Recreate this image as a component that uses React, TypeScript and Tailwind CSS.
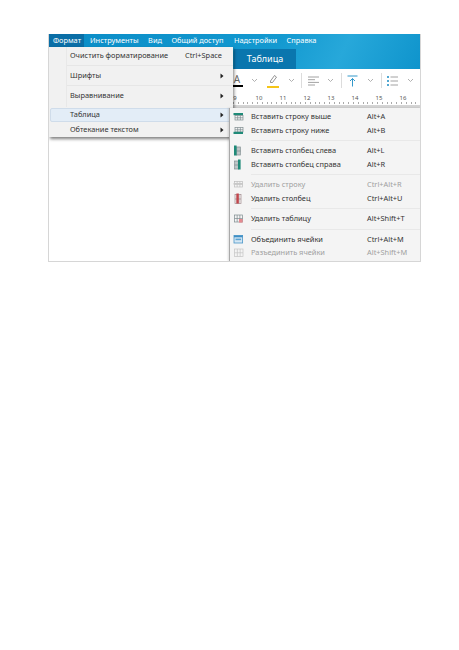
import React from "react";

const font = { fontFamily: '"Noto Sans", "DejaVu Sans", sans-serif' };

function Chevron({ color = "#a8a8a8", ml }: { color?: string; ml: string }) {
  return (
    <svg width="7" height="5" viewBox="0 0 7 5" className={`shrink-0 ${ml}`}>
      <path d="M1 1l2.5 2.5L6 1" fill="none" stroke={color} strokeWidth="0.9" />
    </svg>
  );
}

function Arrow() {
  return (
    <svg width="4" height="6" viewBox="0 0 4 6" className="shrink-0">
      <path d="M0.5 0.5L3.5 3L0.5 5.5Z" fill="#222" />
    </svg>
  );
}

function Grid({ color = "#7d8a8e", x = 0, y = 0, w = 9, h = 7 }: { color?: string; x?: number; y?: number; w?: number; h?: number }) {
  return (
    <g stroke={color} strokeWidth="0.7" fill="none">
      <rect x={x + 0.5} y={y + 0.5} width={w} height={h} />
      <path d={`M${x + 0.5} ${y + h / 2 + 0.5}H${x + w + 0.5}M${x + w / 3 + 0.5} ${y + 0.5}V${y + h + 0.5}M${x + (2 * w) / 3 + 0.5} ${y + 0.5}V${y + h + 0.5}`} />
    </g>
  );
}

type IconKind = "above" | "below" | "left" | "right" | "delrow" | "delcol" | "deltable" | "merge" | "split";

function TableIcon({ kind }: { kind: IconKind }) {
  return (
    <svg width="11" height="11" viewBox="0 0 11 11" className="shrink-0">
      {kind === "above" && (
        <>
          <rect x="0.5" y="2" width="9.5" height="2.2" fill="#1f8a78" />
          <Grid x={1.5} y={4} w={8} h={4.5} />
        </>
      )}
      {kind === "below" && (
        <>
          <Grid x={1.5} y={2} w={8} h={4.5} />
          <rect x="0.5" y="6.8" width="9.5" height="2.2" fill="#1f8a78" />
        </>
      )}
      {kind === "left" && (
        <>
          <Grid x={3} y={1.5} w={4} h={8} />
          <rect x="1" y="0.5" width="2.6" height="10" fill="#1f8a78" />
        </>
      )}
      {kind === "right" && (
        <>
          <Grid x={1} y={1.5} w={4} h={8} />
          <rect x="5" y="0.5" width="2.6" height="10" fill="#1f8a78" />
        </>
      )}
      {kind === "delrow" && (
        <>
          <Grid x={1} y={2} w={8} h={5.5} color="#bcbcbc" />
          <rect x="0.5" y="4" width="9.5" height="1.6" fill="#c8c8c8" />
        </>
      )}
      {kind === "delcol" && (
        <>
          <Grid x={1.5} y={1} w={6} h={9} color="#a08a8e" />
          <rect x="3.4" y="0.5" width="2.4" height="10" fill="#c2454b" />
        </>
      )}
      {kind === "deltable" && (
        <>
          <Grid x={1} y={1.5} w={8} h={7} />
          <rect x="6" y="6" width="3.6" height="3.6" fill="#e58a90" />
        </>
      )}
      {kind === "merge" && (
        <>
          <rect x="1" y="1.5" width="8.6" height="7.5" fill="#d5e7f4" stroke="#4a97c9" strokeWidth="0.8" />
          <rect x="1" y="1.5" width="8.6" height="1.8" fill="#3e8ec4" />
          <rect x="2.5" y="4.6" width="5.6" height="1.6" fill="#5aa3d2" />
        </>
      )}
      {kind === "split" && <Grid x={1} y={1.5} w={8.5} h={7.5} color="#c4c4c4" />}
    </svg>
  );
}

type SubItem = { icon: IconKind; label: string; key: string; disabled?: boolean };

const groups: SubItem[][] = [
  [
    { icon: "above", label: "Вставить строку выше", key: "Alt+A" },
    { icon: "below", label: "Вставить строку ниже", key: "Alt+B" },
  ],
  [
    { icon: "left", label: "Вставить столбец слева", key: "Alt+L" },
    { icon: "right", label: "Вставить столбец справа", key: "Alt+R" },
  ],
  [
    { icon: "delrow", label: "Удалить строку", key: "Ctrl+Alt+R", disabled: true },
    { icon: "delcol", label: "Удалить столбец", key: "Ctrl+Alt+U" },
  ],
  [{ icon: "deltable", label: "Удалить таблицу", key: "Alt+Shift+T" }],
  [
    { icon: "merge", label: "Объединить ячейки", key: "Ctrl+Alt+M" },
    { icon: "split", label: "Разъединить ячейки", key: "Alt+Shift+M", disabled: true },
  ],
];

function SubMenu() {
  return (
    <div className="absolute left-[180px] top-[74px] w-[192px] h-[153px] z-20 bg-[#f4f4f4] border-l border-[#a9a9a9] pt-[2px] text-[7.4px] shadow-[-1px_0_2px_rgba(0,0,0,0.15)]">
      {groups.map((g, i) => (
        <div key={i}>
          {i > 0 && <div className="h-px bg-[#e8e8e8] ml-[21px] my-[3px]" />}
          {g.map((it) => (
            <div key={it.label} className={`flex items-center h-[13.5px] pl-[3px] ${it.disabled ? "text-[#a0a0a0]" : "text-[#333333]"}`}>
              <TableIcon kind={it.icon} />
              <span className="ml-[7px] w-[116px] whitespace-nowrap">{it.label}</span>
              <span className="whitespace-nowrap">{it.key}</span>
            </div>
          ))}
        </div>
      ))}
    </div>
  );
}

function MainRow({ label, right, arrow, h, active }: { label: string; right?: string; arrow?: boolean; h: string; active?: boolean }) {
  return (
    <div
      className={`flex items-center ${h} ${
        active ? "bg-[#e3edf7] border border-[#cfdcea] rounded-[2px] mx-[1px] pl-[19px] pr-[7px]" : "pl-[21px] pr-[9px]"
      }`}
    >
      <span className="flex-1 whitespace-nowrap">{label}</span>
      {right && <span className="mr-[2px] whitespace-nowrap">{right}</span>}
      {arrow && <Arrow />}
    </div>
  );
}

function MainMenu() {
  return (
    <div className="absolute left-0 top-[13px] w-[184px] h-[90px] bg-[#f1f1f1] text-[7.4px] text-[#333333] shadow-[1px_2px_3px_rgba(0,0,0,0.5)] z-10">
      <div className="absolute left-[17px] top-0 h-[60px] w-px bg-[#e8e8e8]" />
      <MainRow label="Очистить форматирование" right="Ctrl+Space" h="h-[18px]" />
      <div className="h-px bg-[#e6e6e6] ml-[18px]" />
      <MainRow label="Шрифты" arrow h="h-[19px]" />
      <div className="h-px bg-[#e6e6e6] ml-[18px]" />
      <MainRow label="Выравнивание" arrow h="h-[19px]" />
      <div className="h-[3px]" />
      <MainRow label="Таблица" arrow active h="h-[14px]" />
      <div className="h-px" />
      <MainRow label="Обтекание текстом" arrow h="h-[14px]" />
    </div>
  );
}

function Ruler() {
  const nums = [9, 10, 11, 12, 13, 14, 15, 16];
  return (
    <div className="h-[16px] bg-white border-b-[3px] border-[#d4d4d4] relative flex items-start pl-[174px] pt-[2px] text-[6px] text-[#555]">
      {nums.map((n) => (
        <div key={n} className="w-[24px] text-center leading-[9px]">
          {n}
        </div>
      ))}
      <div className="absolute bottom-[1px] left-[184px] right-0 h-[2px] bg-[repeating-linear-gradient(90deg,#aaa_0,#aaa_1px,transparent_1px,transparent_4.8px)]" />
    </div>
  );
}

function Divider({ ml }: { ml: string }) {
  return <div className={`w-px h-[15px] bg-[#dcdcdc] shrink-0 ${ml}`} />;
}

export default function App() {
  return (
    <div className="w-[459px] h-[650px] bg-white pt-[34px] pl-[48px]" style={font}>
      <div className="relative w-[373px] h-[228px] border-b border-r border-l border-[#d6d6d6] bg-white overflow-hidden">
        <div className="h-[35px] bg-[linear-gradient(115deg,#0a8cc6_0%,#1399d0_60%,#27a8da_78%,#0f94cc_100%)] text-[7.4px] text-white">
          <div className="flex items-center h-[13px] gap-[9.5px] pl-[4px]">
            <span className="bg-[#0a6ea6] -ml-[4px] -mr-[3.5px] pl-[4px] w-[35px] shrink-0 whitespace-nowrap h-[13px] leading-[13px]">Формат</span>
            <span>Инструменты</span>
            <span>Вид</span>
            <span>Общий доступ</span>
            <span className="ml-[1px]">Надстройки</span>
            <span>Справка</span>
          </div>
          <div className="ml-[185px] mt-[2px] w-[62px] h-[20px] bg-[#0a76ae] text-[9px] leading-[20px] text-center">Таблица</div>
        </div>
        <div className="h-[23px] bg-white flex items-center pl-[182px] text-[#555]">
          <div className="flex flex-col items-center w-[12px] shrink-0">
            <span className="text-[10px] leading-[11px] text-[#666]">A</span>
            <div className="w-[12px] h-[2px] bg-black" />
          </div>
          <Chevron ml="ml-[7.5px]" />
          <svg width="12" height="15" viewBox="0 0 12 15" className="shrink-0 ml-[9.5px]">
            <path d="M3.5 8l4-5.5 2 1.6-4 5.4H3.5z" fill="none" stroke="#777" strokeWidth="0.8" />
            <rect x="0" y="13" width="12" height="2" fill="#f5c518" />
          </svg>
          <Chevron ml="ml-[8.5px]" />
          <Divider ml="ml-[6.5px]" />
          <svg width="11" height="10" viewBox="0 0 11 10" className="shrink-0 ml-[5.5px]">
            <path d="M0 1h11M0 3.7h7M0 6.4h11M0 9h7" stroke="#8a8a8a" strokeWidth="0.8" />
          </svg>
          <Chevron ml="ml-[8.5px]" />
          <Divider ml="ml-[6.5px]" />
          <svg width="11" height="12" viewBox="0 0 11 12" className="shrink-0 ml-[5px]">
            <path d="M0.5 1h10M5.5 11.5V3.5M3 6l2.5-2.5L8 6" fill="none" stroke="#1b8cc4" strokeWidth="0.9" />
          </svg>
          <Chevron ml="ml-[9.5px]" />
          <Divider ml="ml-[6.5px]" />
          <svg width="11" height="10" viewBox="0 0 11 10" className="shrink-0 ml-[5.5px]">
            <path d="M3.5 1h7.5M3.5 5h7.5M3.5 9h7.5" stroke="#8a8a8a" strokeWidth="0.8" />
            <path d="M0 1h2M0 5h2M0 9h2" stroke="#1b8cc4" strokeWidth="1.4" />
          </svg>
          <Chevron ml="ml-[8.5px]" />
        </div>
        <Ruler />
        <MainMenu />
        <SubMenu />
      </div>
    </div>
  );
}
